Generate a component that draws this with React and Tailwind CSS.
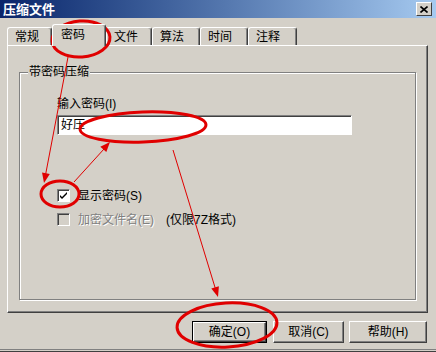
import React from 'react';

const font = { fontFamily: '"Liberation Sans", "Noto Sans CJK SC", sans-serif' };

const Tab = ({ label, width, active }) =>
    active ? (
        <div
            className={`relative z-10 -mb-px h-[22px] border-t border-l border-white border-r border-r-[#404040] shadow-[inset_-1px_0_0_#808080] bg-[#d4d0c8] rounded-t-[3px] pl-[8px] pt-[3px] leading-[14px]`}
            style={{ width }}
        >
            {label}
        </div>
    ) : (
        <div
            className="h-[18px] border-t border-l border-white border-r border-r-[#404040] shadow-[inset_-1px_0_0_#808080] rounded-t-[3px] pl-[7px] pt-[2px] leading-[14px]"
            style={{ width }}
        >
            {label}
        </div>
    );

const Check = ({ checked, disabled }) => (
    <span
        className={`w-[13px] h-[13px] flex items-center justify-center border-t border-l border-[#808080] border-r border-b border-r-white border-b-white shadow-[inset_1px_1px_0_#404040] ${disabled ? 'bg-[#d4d0c8]' : 'bg-white'}`}
    >
        {checked && (
            <svg width="9" height="9" viewBox="0 0 9 9">
                <path d="M1 4 L3 6 L8 1 L8 3 L3 8 L1 6 Z" fill="#000" />
            </svg>
        )}
    </span>
);

const Button = ({ children, width, isDefault }) => (
    <div className={`h-[22px] ${isDefault ? 'border border-black' : ''}`} style={{ width }}>
        <div className="h-full w-full border-t border-l border-white border-r border-b border-r-[#404040] border-b-[#404040] shadow-[inset_-1px_-1px_0_#808080] flex items-center justify-center text-[12px] leading-none">
            {children}
        </div>
    </div>
);

export default function App() {
    const tabs = [
        { label: '常规', width: 45 },
        { label: '密码', width: 54, active: true },
        { label: '文件', width: 46 },
        { label: '算法', width: 48 },
        { label: '时间', width: 48 },
        { label: '注释', width: 49 },
    ];

    return (
        <div className="relative w-[436px] h-[352px] bg-[#d4d0c8] overflow-hidden text-[12px] text-black flex flex-col" style={font}>
            {/* title bar */}
            <div className="h-[18px] bg-gradient-to-r from-[#0a246a] to-[#a6caf0] flex items-center justify-between pl-[3px] pr-[4px]">
                <span className="text-white font-bold text-[13px] leading-none">压缩文件</span>
                <div className="w-[16px] h-[14px] bg-[#d4d0c8] border-t border-l border-white border-r border-b border-r-[#404040] border-b-[#404040] flex items-center justify-center">
                    <svg width="8" height="7" viewBox="0 0 8 7">
                        <path d="M0.5 0.5 L7.5 6.5 M7.5 0.5 L0.5 6.5" stroke="#000" strokeWidth="1.6" />
                    </svg>
                </div>
            </div>

            {/* tabs */}
            <div className="h-[27px] flex items-end pl-[7px]">
                {tabs.map((t) => (
                    <Tab key={t.label} {...t} />
                ))}
            </div>

            {/* tab panel */}
            <div className="ml-[7px] w-[421px] h-[268px] border-t border-l border-white border-r border-b border-r-[#404040] border-b-[#404040] shadow-[inset_-1px_-1px_0_#808080] pt-[26px] pl-[11px]">
                <div className="relative w-[397px] h-[228px] border border-[#808080] shadow-[1px_1px_0_#fff,inset_1px_1px_0_#fff] pl-[37px] pt-[25px]">
                    <span className="absolute left-[8px] -top-[7px] px-[1px] bg-[#d4d0c8] leading-[12px]">带密码压缩</span>
                    <div className="leading-[12px]">输入密码(I)</div>
                    <div className="mt-[5px] w-[295px] h-[20px] bg-white border-t border-l border-[#808080] border-r border-b border-r-white border-b-white shadow-[inset_1px_1px_0_#404040] pl-[3px] flex items-center leading-none">
                        好压
                    </div>
                    <div className="mt-[54px] flex items-center h-[13px]">
                        <Check checked />
                        <span className="ml-[8px] leading-none">显示密码(S)</span>
                    </div>
                    <div className="mt-[11px] flex items-center h-[13px]">
                        <Check disabled />
                        <span className="ml-[8px] leading-none text-[#808080] [text-shadow:1px_1px_0_#fff]">加密文件名(E)</span>
                        <span className="ml-[12px] leading-none">(仅限7Z格式)</span>
                    </div>
                </div>
            </div>

            {/* buttons */}
            <div className="mt-[8px] flex pl-[192px]">
                <Button width={75} isDefault>确定(O)</Button>
                <div className="ml-[6px]">
                    <Button width={71}>取消(C)</Button>
                </div>
                <div className="ml-[5px]">
                    <Button width={78}>帮助(H)</Button>
                </div>
            </div>

            <div className="mt-auto h-[3px] border-t border-[#808080] border-b border-b-[#404040]" />

            {/* red annotations */}
            <svg className="absolute inset-0 pointer-events-none" width="436" height="352" viewBox="0 0 436 352">
                <g fill="none" stroke="#e00000" strokeWidth="3">
                    <ellipse cx="81" cy="39" rx="29" ry="18" transform="rotate(-4 81 39)" />
                    <ellipse cx="143" cy="127" rx="63" ry="15" transform="rotate(-2 143 127)" />
                    <ellipse cx="60" cy="194" rx="19" ry="13" />
                    <ellipse cx="227" cy="325" rx="50" ry="22" transform="rotate(-3 227 325)" />
                </g>
                <g stroke="#e00000" strokeWidth="1">
                    <line x1="68" y1="57" x2="45.5" y2="175" />
                    <line x1="74" y1="182" x2="104" y2="149" />
                    <line x1="173" y1="150" x2="215.5" y2="289" />
                </g>
                <g fill="#e00000">
                    <polygon points="44,183 49.8,173.9 42,172.4" />
                    <polygon points="110,142 106.3,152.1 100.3,146.7" />
                    <polygon points="218,297 218.9,286.2 211.3,288.6" />
                </g>
            </svg>
        </div>
    );
}
